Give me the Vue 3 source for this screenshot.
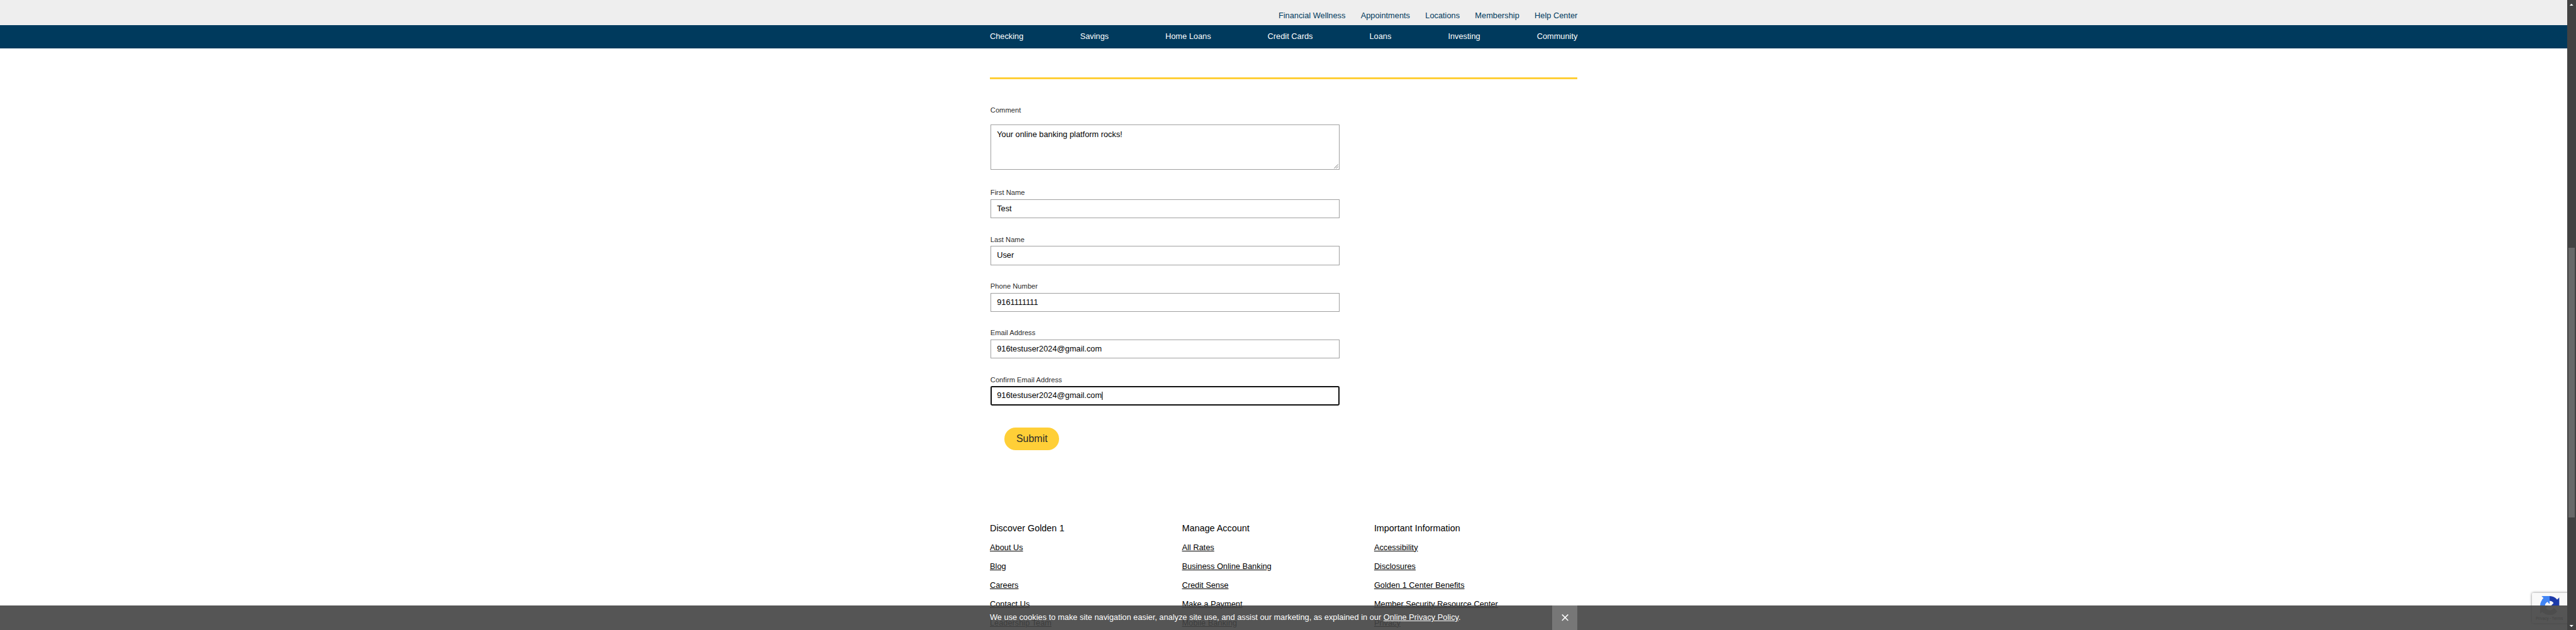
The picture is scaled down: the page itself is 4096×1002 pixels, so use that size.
<script setup>
const topLinks = ['Financial Wellness', 'Appointments', 'Locations', 'Membership', 'Help Center']
const navLinks = ['Checking', 'Savings', 'Home Loans', 'Credit Cards', 'Loans', 'Investing', 'Community']
const fields = [
  { label: 'First Name', value: 'Test' },
  { label: 'Last Name', value: 'User' },
  { label: 'Phone Number', value: '9161111111' },
  { label: 'Email Address', value: '916testuser2024@gmail.com' },
  { label: 'Confirm Email Address', value: '916testuser2024@gmail.com', focused: true },
]
const columns = [
  { title: 'Discover Golden 1', links: ['About Us', 'Blog', 'Careers', 'Contact Us', 'Leadership Team'] },
  { title: 'Manage Account', links: ['All Rates', 'Business Online Banking', 'Credit Sense', 'Make a Payment', 'Mobile Banking'] },
  { title: 'Important Information', links: ['Accessibility', 'Disclosures', 'Golden 1 Center Benefits', 'Member Security Resource Center', 'Privacy'] },
]
</script>

<template>
  <div class="window">
    <div class="page">
      <header>
        <div class="utility">
          <div class="wrap utility-links"><a v-for="l in topLinks" :key="l">{{ l }}</a></div>
        </div>
        <nav class="main-nav">
          <div class="wrap nav-links"><a v-for="l in navLinks" :key="l">{{ l }}</a></div>
        </nav>
      </header>
      <main class="wrap">
        <div class="rule"></div>
        <form class="form" @submit.prevent>
          <div class="field comment">
            <label>Comment</label>
            <div class="control area">
              Your online banking platform rocks!
              <svg class="grip" viewBox="0 0 9 9"><path d="M0.5 8.5L8.5 0.5M4.5 8.5L8.5 4.5" stroke="#555" fill="none" /></svg>
            </div>
          </div>
          <div v-for="f in fields" :key="f.label" class="field">
            <label>{{ f.label }}</label>
            <div class="control" :class="{ focused: f.focused }">{{ f.value }}<i v-if="f.focused" class="caret"></i></div>
          </div>
          <button class="submit">Submit</button>
        </form>
      </main>
      <footer class="wrap columns">
        <section v-for="c in columns" :key="c.title" class="column">
          <h2>{{ c.title }}</h2>
          <ul><li v-for="l in c.links" :key="l"><a>{{ l }}</a></li></ul>
        </section>
      </footer>

      <div class="captcha">
        <svg viewBox="0 0 64 64">
          <path d="M64 31.955a33.3 33.3 0 0 0-.033-1.37V4.687l-7.16 7.16C50.948 4.674 42.033.093 32.05.093c-10.4 0-19.622 4.96-25.458 12.64l11.736 11.86a15.55 15.55 0 0 1 4.754-5.334c2.05-1.6 4.952-2.906 8.968-2.906.485 0 .86.057 1.135.163 4.976.393 9.288 3.14 11.828 7.124l-8.307 8.307L64 31.953" fill="#1c3aa9" />
          <path d="M31.862.094a33.3 33.3 0 0 0-1.37.033H4.594l7.16 7.16C4.58 13.147 0 22.06 0 32.046c0 10.4 4.96 19.622 12.64 25.458L24.5 45.768a15.55 15.55 0 0 1-5.334-4.754c-1.6-2.05-2.906-4.952-2.906-8.968 0-.485.057-.86.163-1.135.393-4.976 3.14-9.288 7.124-11.828l8.307 8.307L31.86.095" fill="#4285f4" />
          <path d="M.001 32.045a33.3 33.3 0 0 0 .033 1.37v25.898l7.16-7.16c5.86 7.173 14.774 11.754 24.76 11.754 10.4 0 19.622-4.96 25.458-12.64l-11.736-11.86a15.55 15.55 0 0 1-4.754 5.334c-2.05 1.6-4.952 2.906-8.968 2.906-.485 0-.86-.057-1.135-.163-4.976-.393-9.288-3.14-11.828-7.124l8.307-8.307L.001 32.046" fill="#ababab" />
        </svg>
        <span>Privacy - Terms</span>
      </div>

      <div class="cookies">
        <div class="wrap cookies-inner">
          <p>We use cookies to make site navigation easier, analyze site use, and assist our marketing, as explained in our <a>Online Privacy Policy</a>.</p>
          <div class="close"><svg viewBox="0 0 14 13"><path d="M1 0.5L13 12.5M13 0.5L1 12.5" stroke="#fff" stroke-width="2" fill="none" /></svg></div>
        </div>
      </div>
    </div>

    <div class="scrollbar">
      <svg viewBox="0 0 7 4"><path d="M3 0h1v1h1v1h1v1h1v1H0V3h1V2h1V1h1z" fill="#fff" /></svg>
      <div class="thumb"></div>
      <svg viewBox="0 0 7 4"><path d="M0 0h7v1H6v1H5v1H4v1H3V3H2V2H1V1H0z" fill="#fff" /></svg>
    </div>
  </div>
</template>

<style>
body { margin: 0; overflow: hidden; background: #fff; }
</style>

<style scoped>
.window {
  zoom: 0.8;
  width: 5120px;
  height: 1252.5px;
  display: flex;
  overflow: hidden;
  background: #fff;
  font-family: "Liberation Sans", Arial, sans-serif;
  font-size: 16px;
  color: #000;
}
.page { position: relative; width: 5103px; height: 100%; overflow: hidden; }
.wrap { width: 1168px; margin: 0 auto; box-sizing: border-box; }
.utility { height: 50px; background: #eee; }
.utility-links { display: flex; justify-content: flex-end; gap: 30.4px; line-height: 20px; padding-top: 21px; color: #003a5d; }
.main-nav { height: 46px; background: #003a5d; color: #fff; }
.nav-links { display: flex; justify-content: space-between; line-height: 20px; padding-top: 12px; }
.rule { height: 3px; margin-top: 58px; background: #ffcf37; }
.form { width: 694px; margin-left: 1px; padding-top: 50px; display: flex; flex-direction: column; align-items: flex-start; }
.field { width: 100%; height: 93px; }
.field label { display: block; box-sizing: border-box; font-size: 14px; line-height: 20px; height: 25px; padding-top: 1.8px; color: #2b2b2b; }
.comment { height: 164px; }
.comment label { height: 41px; }
.control { position: relative; display: flex; align-items: center; height: 38px; box-sizing: border-box; border: 1.25px solid #a0a0a0; padding: 0 11.75px; line-height: 18px; white-space: nowrap; }
.area { height: 90px; align-items: flex-start; padding-top: 9px; }
.grip { position: absolute; right: 1px; bottom: 1px; width: 9px; height: 9px; }
.focused { border: 2.5px solid #101010; border-radius: 3px; padding-left: 10.5px; }
.caret { width: 1.25px; height: 17px; background: #000; }
.submit { margin: 14px 0 0 28px; width: 109px; height: 45px; border: 0; padding: 0; border-radius: 22.5px; background: #ffcf37; font: 20px/45px "Liberation Sans", Arial, sans-serif; color: #2b2b2b; }
.columns { display: flex; padding-top: 144px; }
.column { width: 381.8px; flex: none; }
h2 { margin: 0; font-size: 18px; font-weight: 400; line-height: 24px; height: 39.5px; }
ul { margin: 0; padding: 0; list-style: none; }
li { height: 37.5px; line-height: 20px; white-space: nowrap; }
li a, .cookies a { text-decoration: underline; }
.captcha { position: absolute; left: 5033px; top: 1179px; width: 256px; height: 60px; background: #f9f9f9; border-radius: 2px; box-shadow: 0 0 5px gray; }
.captcha svg { position: absolute; left: 16px; top: 6px; width: 38px; height: 38px; }
.captcha span { position: absolute; left: 7px; top: 46px; font: 8px/10px Roboto, sans-serif; white-space: nowrap; color: #555; }
.cookies { position: absolute; left: 0; right: 0; top: 1204px; bottom: 0; background: rgba(66, 66, 66, 0.9); color: #fff; }
.cookies-inner { display: flex; justify-content: space-between; height: 100%; }
.cookies p { margin: 0; padding-top: 14px; line-height: 20px; }
.close { width: 50px; display: flex; align-items: center; justify-content: center; background: #777; }
.close svg { width: 14px; height: 13px; }
.scrollbar { width: 17px; background: #424242; display: flex; flex-direction: column; align-items: center; box-sizing: border-box; padding: 7px 0 6px; }
.scrollbar svg { width: 7px; height: 4px; flex: none; }
.thumb { width: 13px; height: 537px; margin: 481px 0 auto; background: #686868; }
</style>
